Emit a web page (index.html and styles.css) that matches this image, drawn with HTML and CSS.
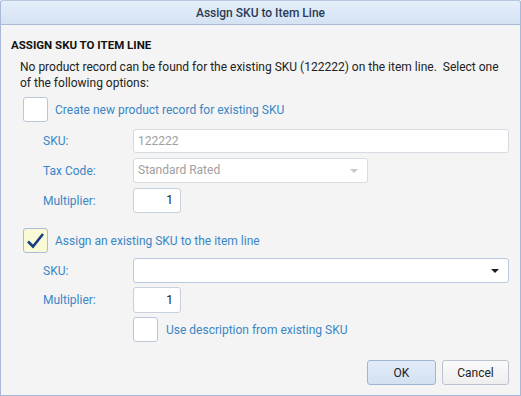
FILE: index.html
```html
<!DOCTYPE html>
<html lang="en">
<head>
    <meta charset="UTF-8" />
    <title>Assign SKU to Item Line</title>
    <link rel="stylesheet" href="styles.css">
</head>
<body>
    <div class="dialog">
        <div class="titlebar">Assign SKU to Item Line</div>
        <div class="content">
            <h2>ASSIGN SKU TO ITEM LINE</h2>
            <p class="intro">No product record can be found for the existing SKU (122222) on the item line.&nbsp; Select one of the following options:</p>

            <div class="option">
                <span class="check"></span>
                <span class="option-label">Create new product record for existing SKU</span>
            </div>
            <div class="form first-form">
                <label>SKU:</label>
                <div class="field wide disabled">122222</div>
                <label>Tax Code:</label>
                <div class="field select disabled">Standard Rated<span class="arrow light"></span></div>
                <label>Multiplier:</label>
                <div class="field number">1</div>
            </div>

            <div class="option second">
                <span class="check checked">
                    <svg width="19" height="17" viewBox="0 0 19 17"><path d="M2 9.5 L7 14.5 L17 2" fill="none" stroke="#1a3c86" stroke-width="2.6"/></svg>
                </span>
                <span class="option-label">Assign an existing SKU to the item line</span>
            </div>
            <div class="form second-form">
                <label>SKU:</label>
                <div class="field wide combo"><span class="arrow"></span></div>
                <label>Multiplier:</label>
                <div class="field number tall">1</div>
                <span></span>
                <div class="sub-option">
                    <span class="check"></span>
                    <span class="option-label">Use description from existing SKU</span>
                </div>
            </div>
        </div>
        <div class="footer">
            <button class="primary">OK</button>
            <button>Cancel</button>
        </div>
    </div>
</body>
</html>
```

FILE: styles.css
```css
body {
    margin: 0;
    padding: 0;
    font-family: Roboto, "Liberation Sans", sans-serif;
    font-size: 12px;
}

.dialog {
    width: 521px;
    height: 396px;
    box-sizing: border-box;
    border: 1px solid #a7b9d6;
    border-top: none;
    border-radius: 3px 3px 0 0;
    background: #f4f4f4;
    display: flex;
    flex-direction: column;
}

.titlebar {
    height: 25px;
    box-sizing: border-box;
    line-height: 24px;
    text-align: center;
    font-weight: 500;
    color: #2b3b55;
    background: linear-gradient(#e6effa, #d4e2f3);
    border-top: 1px solid #b7c8e0;
    border-bottom: 1px solid #a9bbd7;
    margin: 0 -1px;
    border-left: 1px solid #a7b9d6;
    border-right: 1px solid #a7b9d6;
    border-radius: 3px 3px 0 0;
}

.content {
    padding: 12px 11px 0 10px;
}

h2 {
    margin: 0;
    font-size: 11.5px;
    line-height: 16px;
    font-weight: bold;
    color: #111;
}

.intro {
    margin: 6px 0 0 9px;
    line-height: 16px;
    color: #222;
}

.option {
    display: flex;
    align-items: center;
    gap: 7px;
    margin: 6px 0 0 12px;
}

.option.second {
    margin-top: 15px;
}

.check {
    width: 25px;
    height: 25px;
    box-sizing: border-box;
    border: 1px solid #bcc6d6;
    border-radius: 3px;
    background: #fff;
    display: flex;
    align-items: center;
    justify-content: center;
    flex-shrink: 0;
}

.check.checked {
    background: #fafad6;
    border-color: #a9bcd8;
}

.option-label {
    color: #3a86c6;
}

.form {
    display: grid;
    grid-template-columns: 90px 1fr;
    align-items: center;
    row-gap: 5px;
    margin-left: 32px;
    margin-top: 7px;
}

.second-form {
    margin-top: 5px;
    row-gap: 4px;
}

.form label {
    color: #3a86c6;
}

.field {
    position: relative;
    height: 25px;
    box-sizing: border-box;
    border: 1px solid #c7d0dd;
    border-radius: 3px;
    background: #fff;
    line-height: 23px;
    padding: 0 4px;
    color: #222;
}

.field.wide {
    height: 24px;
    line-height: 22px;
}

.field.combo {
    height: 25px;
    border-color: #b9c9e0;
}

.field.disabled {
    color: #a0a0a0;
    border-color: #d6dbe2;
}

.field.select {
    width: 235px;
}

.field.number {
    width: 48px;
    text-align: right;
    padding-right: 7px;
}

.field.tall {
    height: 26px;
    line-height: 24px;
}

.arrow {
    position: absolute;
    right: 9px;
    top: 10px;
    border-left: 4px solid transparent;
    border-right: 4px solid transparent;
    border-top: 4px solid #1d1d2a;
}

.arrow.light {
    border-top-color: #c8c8c8;
}

.sub-option {
    display: flex;
    align-items: center;
    gap: 8px;
}

.footer {
    margin-top: auto;
    display: flex;
    justify-content: flex-end;
    gap: 6px;
    padding: 0 11px 10px 0;
}

button {
    height: 25px;
    width: 67px;
    font-family: Roboto, "Liberation Sans", sans-serif;
    font-size: 12px;
    color: #222;
    border: 1px solid #bcc3cf;
    border-radius: 3px;
    background: linear-gradient(#fbfbfb, #eeeeee);
}

button.primary {
    width: 69px;
    border-color: #9fb5d3;
    background: linear-gradient(#e2ecf8, #d3e1f1);
}
```
